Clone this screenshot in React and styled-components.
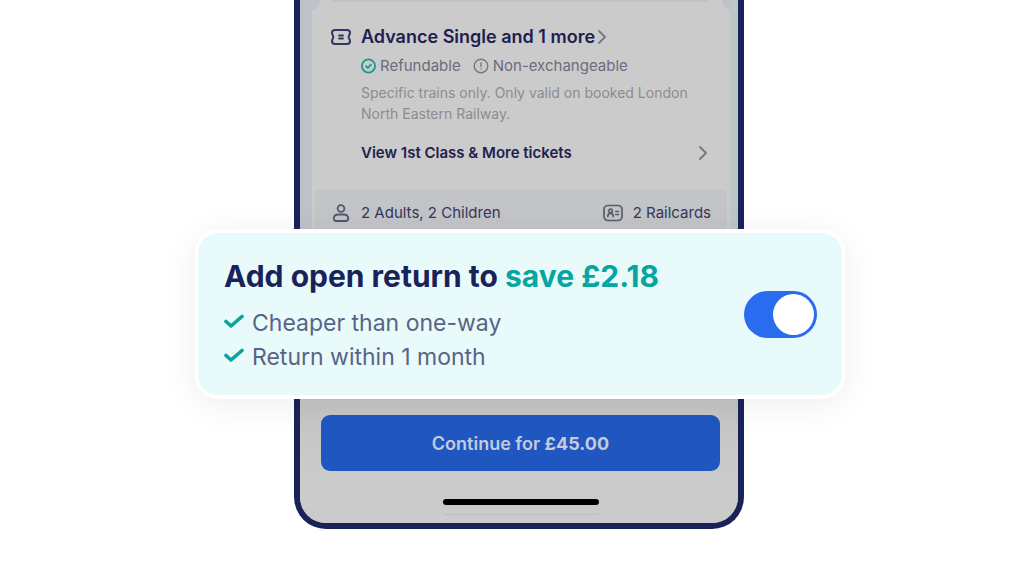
import React, { useState } from 'react'
import styled, { createGlobalStyle } from 'styled-components'

const GlobalStyle = createGlobalStyle`
  *, *::before, *::after {
    box-sizing: border-box;
  }

  body {
    margin: 0;
    background: #fff;
    font-family: Inter, "Liberation Sans", sans-serif;
    color: #20204f;
  }
`

const StyledPage = styled.main`
  display: flex;
  justify-content: center;
  min-height: 100vh;
  padding: 0 0 52px 9px;
  overflow: hidden;
`

const StyledPhone = styled.div`
  display: flex;
  flex-direction: column;
  align-self: flex-start;
  width: 100%;
  max-width: 450px;
  border: 6px solid #1a225a;
  border-top: 0;
  border-radius: 0 0 32px 32px;
  background: #cbcbcb;
`

const StyledScreen = styled.div`
  padding: 0 8px 0 12px;
  background: linear-gradient(90deg, #bfc1c9, #c0c5c8 50%, #bcc7c6);
`

const StyledTicket = styled.section`
  position: relative;
  height: 230px;
  overflow: hidden;
  padding: 0 3px;
  background: #cbcbcb;

  &::before,
  &::after {
    content: '';
    position: absolute;
    top: -8px;
    width: 16px;
    height: 18px;
    border-radius: 50%;
    background: #bfc2c8;
  }

  &::before {
    left: -8px;
  }

  &::after {
    right: -8px;
  }
`

const StyledFare = styled.div`
  display: grid;
  grid-template-columns: 20px 1fr;
  column-gap: 10px;
  height: 190px;
  margin: 0 19px 0 16px;
  padding-top: 24px;
  border-top: 2px solid #c3c3c4;
`

const StyledLink = styled.a`
  display: flex;
  align-items: center;
  justify-content: ${props => props.$wide ? 'space-between' : 'flex-start'};
  gap: 2px;
  color: inherit;
  font-size: ${props => props.$wide ? '15px' : '18px'};
  font-weight: 600;
  line-height: 22px;
  text-decoration: none;
`

const StyledTags = styled.ul`
  display: flex;
  gap: 12px;
  margin: 8px 0 6px;
  padding: 0;
  list-style: none;
  color: #6b6b7d;
  font-size: 15px;
  line-height: 20px;

  li {
    display: flex;
    align-items: center;
    gap: 4px;
  }
`

const StyledNote = styled.p`
  margin: 0 0 18px;
  color: #8c8c90;
  font-size: 14px;
  line-height: 21px;
`

const StyledPassengers = styled.div`
  display: flex;
  justify-content: space-between;
  height: 60px;
  padding: 12px 16px;
  border-radius: 4px;
  background: #c3c4c7;
  color: #36365c;
  font-size: 15px;
  line-height: 22px;

  span {
    display: flex;
    align-items: center;
    gap: 10px;
    height: 22px;
  }
`

const StyledOffer = styled.section`
  position: relative;
  display: flex;
  align-items: center;
  justify-content: space-between;
  min-height: 170px;
  margin: -1px -107px 0 -105px;
  padding: 20px 25px 20px 26px;
  border: 4px solid #fff;
  border-width: 4px 3px;
  border-radius: 24px;
  background: #e9fafa;
  box-shadow: 0 6px 36px rgba(0, 0, 0, 0.07);

  h2 {
    margin: 0 0 12px;
    color: #1a225a;
    font-size: 30px;
    font-weight: 700;
    line-height: 36px;
  }

  em {
    color: #07a5a0;
    font-style: normal;
  }

  ul {
    margin: 0;
    padding: 0;
    list-style: none;
    color: #586486;
    font-size: 23px;
    line-height: 34px;
  }

  li {
    display: flex;
    align-items: center;
    gap: 8px;
  }
`

const StyledOfferText = styled.div`
  padding-top: 3px;
`

const StyledSwitch = styled.input`
  appearance: none;
  flex: none;
  display: flex;
  width: 73px;
  height: 47px;
  margin: 0;
  padding: 3px;
  border-radius: 24px;
  background: ${props => props.checked ? '#2b6bf0' : '#a8b0c4'};
  cursor: pointer;

  &::before {
    content: '';
    width: 41px;
    height: 41px;
    margin-left: ${props => props.checked ? 'auto' : '0'};
    border-radius: 50%;
    background: #fff;
  }
`

const StyledFooter = styled.footer`
  display: flex;
  flex-direction: column;
  align-items: center;
  padding: 16px 18px 8px 21px;
  border-radius: 0 0 26px 26px;
  background: linear-gradient(#c4c4c4, #cbcbcb 80px);
`

const StyledContinue = styled.button`
  width: 100%;
  height: 56px;
  margin-bottom: 28px;
  border: 0;
  border-radius: 9px;
  background: #2056c0;
  color: #c3cbdc;
  font-family: inherit;
  font-size: 18px;
  font-weight: 600;
  cursor: pointer;

  b {
    font-weight: 700;
  }
`

const StyledHomeBar = styled.div`
  width: 156px;
  height: 6px;
  border-radius: 3px;
  background: #000;
`

const StyledHairline = styled.div`
  width: 154px;
  height: 1px;
  margin-top: 9px;
  background: #bdbdbd;
`

const TicketIcon = () => (
  <svg width="20" height="22" viewBox="0 0 20 22" fill="none" stroke="#343463" strokeWidth="2" strokeLinecap="round" strokeLinejoin="round">
    <path d="M4 4h12c2 0 3 1 3 2.800 0 2-1.300 2.200-1.300 4.200s1.300 2.200 1.300 4.200c0 1.800-1 2.800-3 2.800H4c-2 0-3-1-3-2.800 0-2 1.300-2.200 1.300-4.200S1 8.800 1 6.800C1 5 2 4 4 4z" />
    <path d="M8 9.500h4M8 12.500h4" strokeWidth="1.800" />
  </svg>
)

const CheckCircleIcon = () => (
  <svg width="15" height="16" viewBox="0 0 15 16" fill="none" stroke="#159b90" strokeWidth="1.800" strokeLinecap="round" strokeLinejoin="round">
    <circle cx="7.500" cy="8" r="6.600" />
    <path d="M5 8.200l1.800 1.700 3.200-3.300" />
  </svg>
)

const InfoIcon = () => (
  <svg width="16" height="16" viewBox="0 0 16 16" fill="none" stroke="#77777f" strokeWidth="1.400" strokeLinecap="round">
    <circle cx="8" cy="8" r="6.800" />
    <path d="M8 4.700v3.800M8 11v.1" />
  </svg>
)

const ChevronIcon = () => (
  <svg width="10" height="14" viewBox="0 0 10 14" fill="none" stroke="#77777f" strokeWidth="1.800" strokeLinecap="round" strokeLinejoin="round">
    <path d="M2 1l6 6-6 6" />
  </svg>
)

const PersonIcon = () => (
  <svg width="20" height="20" viewBox="0 0 20 20" fill="none" stroke="#55556f" strokeWidth="1.800">
    <circle cx="10" cy="5.500" r="3.400" />
    <path d="M7.500 11.500h5q4.700 0 4.700 4 0 2.500-2.500 2.500H5.300q-2.500 0-2.500-2.500 0-4 4.700-4z" />
  </svg>
)

const RailcardIcon = () => (
  <svg width="20" height="18" viewBox="0 0 20 18" fill="none" stroke="#5c5c6c" strokeWidth="1.700" strokeLinecap="round">
    <rect x="1" y="1.500" width="18" height="15" rx="4" />
    <circle cx="7.500" cy="7" r="1.800" />
    <path d="M4.800 12.500q0-3.200 2.700-3.200t2.700 3.200M12.800 7.500h2.700M12.800 10.500h2.700" />
  </svg>
)

const TickIcon = () => (
  <svg width="20" height="20" viewBox="0 0 20 20" fill="none" stroke="#07a5a0" strokeWidth="3.600" strokeLinecap="round" strokeLinejoin="round">
    <path d="M2 8.500l5 4.500L18 3.500" />
  </svg>
)

const App = () => {
  const [openReturn, setOpenReturn] = useState(true)

  return (
    <StyledPage>
      <GlobalStyle />
      <StyledPhone>
        <StyledScreen>
          <StyledTicket>
            <StyledFare>
              <TicketIcon />
              <div>
                <StyledLink href="#fares">Advance Single and 1 more <ChevronIcon /></StyledLink>
                <StyledTags>
                  <li><CheckCircleIcon />Refundable</li>
                  <li><InfoIcon />Non-exchangeable</li>
                </StyledTags>
                <StyledNote>
                  Specific trains only. Only valid on booked London North Eastern Railway.
                </StyledNote>
                <StyledLink href="#tickets" $wide>View 1st Class &amp; More tickets <ChevronIcon /></StyledLink>
              </div>
            </StyledFare>
            <StyledPassengers>
              <span><PersonIcon />2 Adults, 2 Children</span>
              <span><RailcardIcon />2 Railcards</span>
            </StyledPassengers>
          </StyledTicket>
        </StyledScreen>
        <StyledOffer>
          <StyledOfferText>
            <h2><label htmlFor="open-return">Add open return to <em>save £2.18</em></label></h2>
            <ul>
              <li><TickIcon />Cheaper than one-way</li>
              <li><TickIcon />Return within 1 month</li>
            </ul>
          </StyledOfferText>
          <StyledSwitch
            id="open-return"
            type="checkbox"
            role="switch"
            checked={openReturn}
            onChange={() => setOpenReturn(!openReturn)}
          />
        </StyledOffer>
        <StyledFooter>
          <StyledContinue type="button">Continue for <b>£45.00</b></StyledContinue>
          <StyledHomeBar />
          <StyledHairline />
        </StyledFooter>
      </StyledPhone>
    </StyledPage>
  )
}

export default App
